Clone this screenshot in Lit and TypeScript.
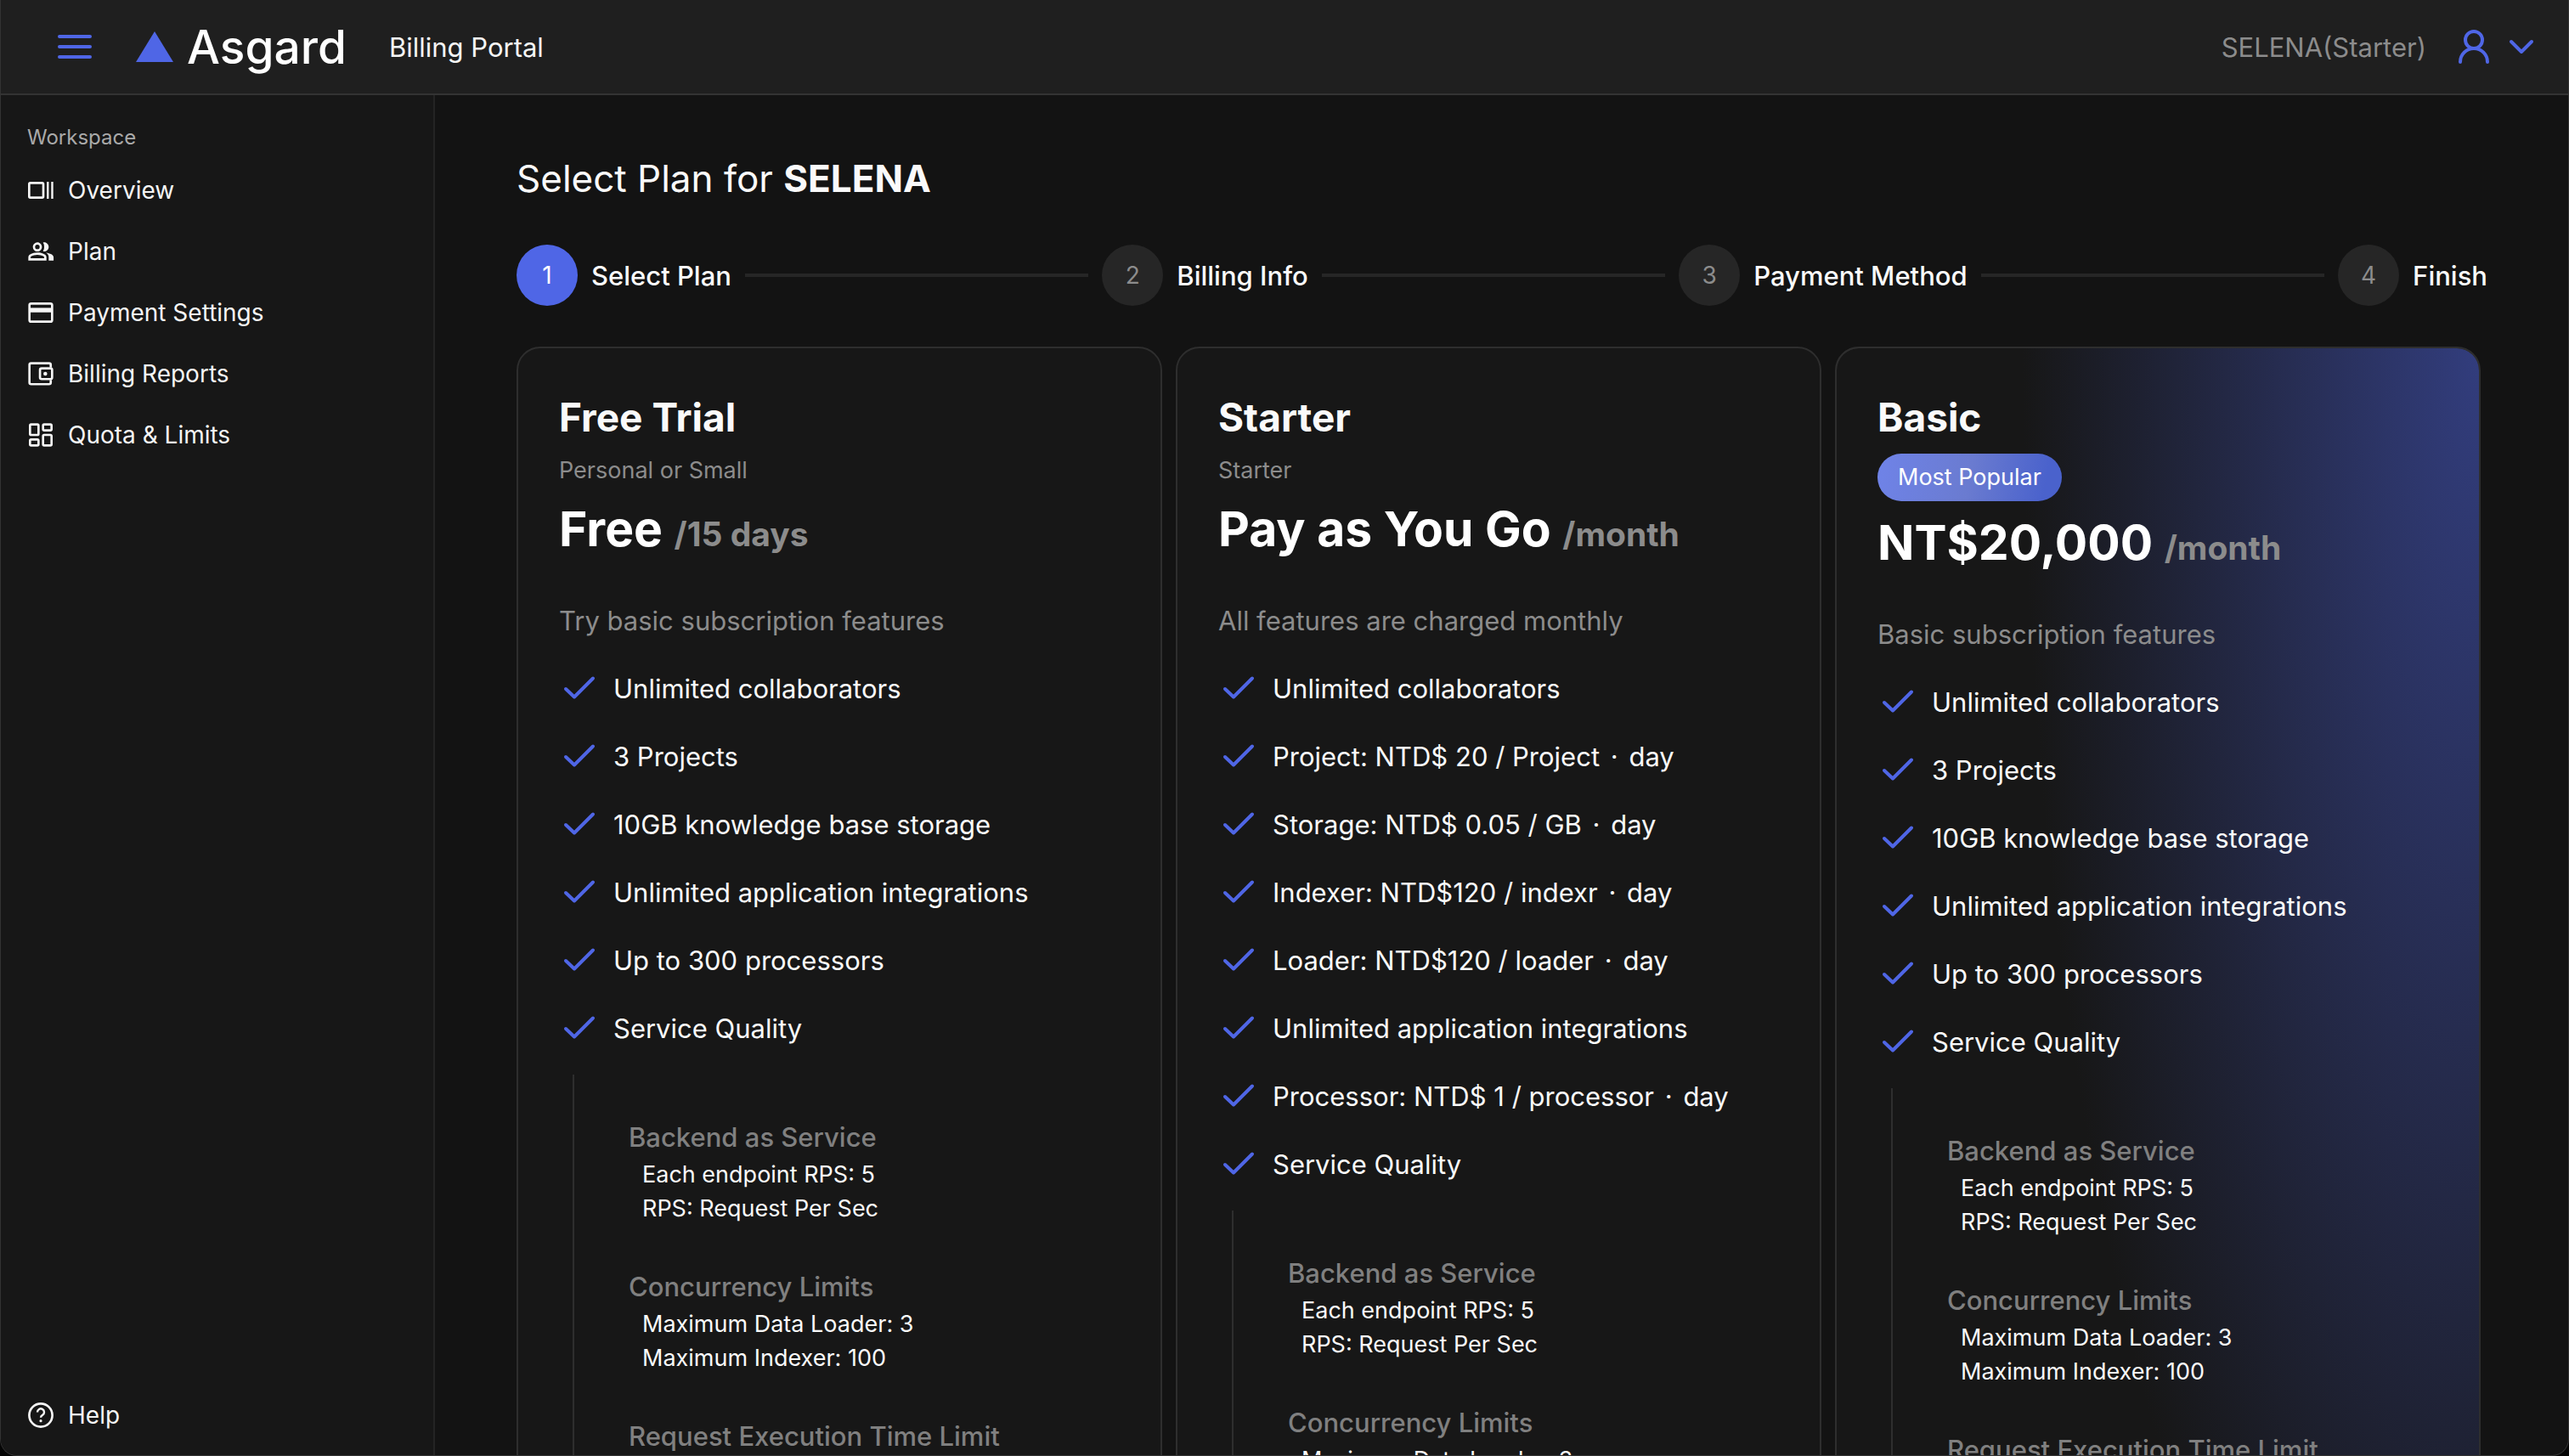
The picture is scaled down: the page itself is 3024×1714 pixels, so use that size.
import { LitElement, html, css, svg } from "lit";
import { customElement, property } from "lit/decorators.js";

type Plan = {
  name: string;
  note: string;
  badge?: string;
  price: string;
  unit: string;
  summary: string;
  features: Feature[];
};

// `per` is the billing period, set off from the text by a middle dot.
type Feature = { text: string; per?: string };

type NavItem = { label: string; icon: unknown };

const icons = {
  overview: svg`<rect x="1.75" y="5.500" width="12.500" height="13" rx="1"/><path d="M18.200 4.500v15M22.100 4.500v15" stroke-width="1.800"/>`,
  plan: svg`<g fill="currentColor" stroke="none"><path d="M1 20v-2.8c0-.6.1-1.1.4-1.500.3-.5.7-.9 1.200-1.100a14.800 14.800 0 0 1 3.100-1.200A13.800 13.800 0 0 1 9 13c1.100 0 2.200.1 3.300.4 1.100.3 2.100.7 3.100 1.200.5.2.9.6 1.200 1.100.3.4.4.9.4 1.500V20H1Zm18 0v-3c0-.7-.2-1.400-.6-2.100a5.200 5.200 0 0 0-1.800-1.800c.9.1 1.700.3 2.500.5.8.2 1.500.5 2.200.9.6.4 1.100.8 1.500 1.200.3.500.500 1 .500 1.500V20H19ZM9 12c-1.100 0-2-.4-2.800-1.200A3.900 3.900 0 0 1 5 8c0-1.100.4-2 1.200-2.800A3.900 3.900 0 0 1 9 4c1.100 0 2 .4 2.800 1.200C12.600 6 13 6.900 13 8c0 1.100-.4 2-1.200 2.800-.8.8-1.700 1.200-2.800 1.200Zm10-4c0 1.100-.4 2-1.200 2.800A3.900 3.900 0 0 1 14 11.900a6 6 0 0 0 1-3.900 6 6 0 0 0-1-3.800c1.400-.5 2.800-.1 3.800 1C18.600 6 19 6.900 19 8ZM3 18h12v-.8a.9.900 0 0 0-.500-.8 11.800 11.800 0 0 0-2.600-1c-1.900-.5-3.900-.5-5.800 0-.9.200-1.700.600-2.600 1a.9.900 0 0 0-.500.800v.800Zm6-8a2 2 0 1 0 0-4 2 2 0 0 0 0 4Z" fill-rule="evenodd"/></g>`,
  payment: svg`<rect x="2" y="4" width="20" height="16" rx="1.500"/><path d="M2 9.800h20" stroke-width="4"/>`,
  billing: svg`<path d="M20.800 6.500V4.200a1.500 1.500 0 0 0-1.500-1.500H3.500A1.500 1.500 0 0 0 2 4.200v15.500a1.500 1.500 0 0 0 1.500 1.500h15.800a1.500 1.500 0 0 0 1.500-1.500V17.400"/><rect x="11.300" y="7.200" width="10.700" height="9.500" rx="1.500"/><circle cx="16" cy="12" r="1.700" fill="currentColor" stroke="none"/>`,
  quota: svg`<rect x="2.500" y="2.700" width="7.500" height="9.300" rx="1"/><rect x="14" y="2.700" width="7.500" height="5.300" rx="1"/><rect x="14" y="12" width="7.500" height="9.300" rx="1"/><rect x="2.500" y="16" width="7.500" height="5.300" rx="1"/>`,
  help: svg`<circle cx="12" cy="12" r="10.200"/><path d="M9 9.300a3 3 0 1 1 4.600 2.500c-1 .7-1.600 1.100-1.600 2.200" stroke-width="1.800"/><circle cx="12" cy="17" r="1.200" fill="currentColor" stroke="none"/>`,
};

const navItems: NavItem[] = [
  { label: "Overview", icon: icons.overview },
  { label: "Plan", icon: icons.plan },
  { label: "Payment Settings", icon: icons.payment },
  { label: "Billing Reports", icon: icons.billing },
  { label: "Quota & Limits", icon: icons.quota },
];

const steps = ["Select Plan", "Billing Info", "Payment Method", "Finish"];

const standardFeatures: Feature[] = [
  { text: "Unlimited collaborators" },
  { text: "3 Projects" },
  { text: "10GB knowledge base storage" },
  { text: "Unlimited application integrations" },
  { text: "Up to 300 processors" },
  { text: "Service Quality" },
];

const plans: Plan[] = [
  {
    name: "Free Trial",
    note: "Personal or Small",
    price: "Free",
    unit: "/15 days",
    summary: "Try basic subscription features",
    features: standardFeatures,
  },
  {
    name: "Starter",
    note: "Starter",
    price: "Pay as You Go",
    unit: "/month",
    summary: "All features are charged monthly",
    features: [
      { text: "Unlimited collaborators" },
      { text: "Project: NTD$ 20 / Project", per: "day" },
      { text: "Storage: NTD$ 0.05 / GB", per: "day" },
      { text: "Indexer: NTD$120 / indexr", per: "day" },
      { text: "Loader: NTD$120 / loader", per: "day" },
      { text: "Unlimited application integrations" },
      { text: "Processor: NTD$ 1 / processor", per: "day" },
      { text: "Service Quality" },
    ],
  },
  {
    name: "Basic",
    note: "",
    badge: "Most Popular",
    price: "NT$20,000",
    unit: "/month",
    summary: "Basic subscription features",
    features: standardFeatures,
  },
];

const quality = [
  { title: "Backend as Service", lines: ["Each endpoint RPS: 5", "RPS: Request Per Sec"] },
  { title: "Concurrency Limits", lines: ["Maximum Data Loader: 3", "Maximum Indexer: 100"] },
  { title: "Request Execution Time Limit", lines: [] },
];

@customElement("side-nav")
class SideNav extends LitElement {
  static styles = css`
    :host { display: flex; }
    .nav {
      flex: 1;
      display: flex;
      flex-direction: column;
      padding: 28px 0 11px 31px;
    }
    .heading { margin: 0; font-size: 24px; line-height: 44px; font-weight: 400; color: #a9a9a9; }
    .item {
      display: flex;
      align-items: center;
      gap: 16px;
      height: 72px;
      font-size: 28px;
      color: #f5f5f5;
      text-decoration: none;
    }
    .items { flex: 1; margin: 4px 0 0; padding: 0; list-style: none; }
    .icon { width: 32px; height: 32px; fill: none; stroke: currentColor; stroke-width: 2; }
  `;

  private item({ label, icon }: NavItem) {
    return html`<a class="item" href="#">
      <svg class="icon" viewBox="0 0 24 24" aria-hidden="true">${icon}</svg>${label}
    </a>`;
  }

  render() {
    return html`<nav class="nav" aria-label="Workspace">
      <h2 class="heading">Workspace</h2>
      <ul class="items">${navItems.map((n) => html`<li>${this.item(n)}</li>`)}</ul>
      ${this.item({ label: "Help", icon: icons.help })}
    </nav>`;
  }
}

@customElement("step-bar")
class StepBar extends LitElement {
  static styles = css`
    :host { display: block; }
    .steps { display: flex; align-items: center; gap: 16px; margin: 0; padding: 0; list-style: none; }
    .step { display: flex; flex: 1 1 auto; align-items: center; gap: 16px; }
    .step:last-child { flex: none; }
    .dot {
      display: grid;
      place-items: center;
      width: 72px;
      height: 72px;
      border-radius: 50%;
      background: #262626;
      color: #8c8c8c;
      font-size: 28px;
    }
    .current .dot { background: #4f66e6; color: #fff; }
    .label { font-size: 31px; font-weight: 500; color: #fafafa; white-space: nowrap; }
    .step:not(:last-child)::after { content: ""; flex: 1; height: 4px; background: #262626; }
  `;

  render() {
    return html`<ol class="steps">
      ${steps.map(
        (s, i) => html`<li class="step ${i === 0 ? "current" : ""}">
          <span class="dot">${i + 1}</span><span class="label">${s}</span>
        </li>`
      )}
    </ol>`;
  }
}

@customElement("plan-card")
class PlanCard extends LitElement {
  @property({ attribute: false }) plan!: Plan;

  static styles = css`
    :host { display: flex; }
    .card {
      flex: 1;
      padding: 48px 48px 80px;
      border: 2px solid #2e2e2e;
      border-radius: 28px;
      background: #171717;
    }
    .popular {
      background: radial-gradient(71% 1816px at top right, #323d7d, #171717) padding-box, #2e2e2e border-box;
    }
    .name { margin: 0 0 8px; font-size: 46px; line-height: 66px; font-weight: 700; color: #fafafa; }
    .note { margin: 0; font-size: 27px; line-height: 44px; color: #8c8c8c; }
    .badge-row { display: flex; padding: 2px 0; }
    .badge {
      padding: 0 24px;
      border-radius: 28px;
      background: linear-gradient(100deg, #6f83e8, #6a7bd0 50%, #4a62cc 90%);
      font-size: 27px;
      line-height: 56px;
      color: #fff;
    }
    .price { margin: 0; font-size: 57px; line-height: 94px; font-weight: 700; color: #fff; }
    .unit { font-size: 39px; color: #8c8c8c; }
    .summary { margin: 33px 0 0; font-size: 31px; line-height: 44px; color: #8c8c8c; }
    .features { margin: 18px 0 0; padding: 0; list-style: none; }
    .feature {
      display: flex;
      align-items: center;
      gap: 16px;
      font-size: 31px;
      line-height: 80px;
      color: #fafafa;
      white-space: nowrap;
    }
    .separator { margin: 0 4px; }
    .check { width: 48px; height: 48px; fill: none; stroke: #4f66e6; stroke-width: 4; stroke-linecap: round; stroke-linejoin: round; }
    .quality { margin: 14px 0 0 16px; padding: 50px 0 0 64px; border-left: 2px solid #2e2e2e; }
    .group { padding-bottom: 48px; }
    .group-title { margin: 0; font-size: 31px; line-height: 48px; font-weight: 500; color: #808080; }
    .line { margin: 0; padding-left: 16px; font-size: 27px; line-height: 40px; color: #fafafa; }
  `;

  render() {
    const p = this.plan;
    return html`<article class="card ${p.badge ? "popular" : ""}">
      <h2 class="name">${p.name}</h2>
      ${p.badge
        ? html`<div class="badge-row"><span class="badge">${p.badge}</span></div>`
        : html`<p class="note">${p.note}</p>`}
      <p class="price">${p.price} <span class="unit">${p.unit}</span></p>
      <p class="summary">${p.summary}</p>
      <ul class="features">
        ${p.features.map(
          (f) => html`<li class="feature">
            <svg class="check" viewBox="0 0 48 48" aria-hidden="true"><path d="M8 24l10 9.500 22-22" /></svg>
            <span>${f.text}${f.per ? html` <span class="separator">·</span> ${f.per}` : ""}</span>
          </li>`
        )}
      </ul>
      <div class="quality">
        ${quality.map(
          (g) => html`<section class="group">
            <h3 class="group-title">${g.title}</h3>
            ${g.lines.map((l) => html`<p class="line">${l}</p>`)}
          </section>`
        )}
      </div>
    </article>`;
  }
}

@customElement("app-root")
class AppRoot extends LitElement {
  static styles = css`
    :host {
      display: block;
      background: #050505;
      font-family: Inter, "Noto Sans", "Liberation Sans", sans-serif;
    }
    .shell {
      box-sizing: border-box;
      display: grid;
      grid-template: auto minmax(0, 1fr) / 512px minmax(0, 1fr);
      height: 100vh;
      overflow: hidden;
      border: 1px solid #333;
      border-top: 0;
      border-radius: 0 0 20px 20px;
      background: #131313;
    }
    .top {
      grid-column: 1 / -1;
      display: flex;
      align-items: center;
      height: 110px;
      padding: 0 35px 0 63px;
      border-bottom: 2px solid #333;
      background: #1f1f1f;
    }
    .icon-button { display: flex; padding: 0; border: 0; background: none; color: #4f66e6; cursor: pointer; }
    .stroke { fill: none; stroke: currentColor; stroke-width: 4; stroke-linecap: round; stroke-linejoin: round; }
    .menu { width: 48px; height: 48px; }
    .brand { display: flex; align-items: center; gap: 16px; margin-left: 48px; color: #fff; text-decoration: none; }
    .mark { width: 44px; height: 36px; fill: #4f66e6; }
    .wordmark { font-size: 55px; line-height: 64px; font-weight: 500; }
    .portal { flex: 1; margin-left: 50px; font-size: 31px; color: #f5f5f5; }
    .account { margin-right: 32px; font-size: 31px; color: #8c8c8c; }
    .user-menu { align-items: center; gap: 12px; }
    .user { width: 48px; height: 48px; }
    .chevron { width: 40px; height: 40px; }
    .side { border-right: 2px solid #242424; background: #171717; margin-right: 1px; }
    .main { overflow: hidden; padding: 64px 95px 0; }
    .title { margin: 0 0 44px; font-size: 44px; line-height: 68px; font-weight: 400; color: #fafafa; }
    .strong { font-weight: 700; }
    .plans { display: grid; grid-template-columns: repeat(3, minmax(0, 1fr)); align-items: stretch; gap: 16px; padding: 48px 8px 0 0; }
  `;

  render() {
    return html`<div class="shell">
      <header class="top">
        <button class="icon-button" aria-label="Toggle menu">
          <svg class="menu stroke" viewBox="0 0 48 48"><path d="M6 12h36M6 24h36M6 36h36" /></svg>
        </button>
        <a class="brand" href="#">
          <svg class="mark" viewBox="0 0 44 36" aria-hidden="true"><path d="M22 0l22 36H0z" /></svg>
          <span class="wordmark">Asgard</span>
        </a>
        <span class="portal">Billing Portal</span>
        <span class="account">SELENA(Starter)</span>
        <button class="icon-button user-menu" aria-label="Account menu">
          <svg class="user stroke" viewBox="0 0 48 48"><circle cx="24" cy="16" r="10" /><path d="M8 42a16 16 0 0 1 32 0" /></svg>
          <svg class="chevron stroke" viewBox="0 0 40 40"><path d="M8 14l12 12 12-12" /></svg>
        </button>
      </header>
      <side-nav class="side"></side-nav>
      <main class="main">
        <h1 class="title">Select Plan for <strong class="strong">SELENA</strong></h1>
        <step-bar></step-bar>
        <div class="plans">${plans.map((p) => html`<plan-card .plan=${p}></plan-card>`)}</div>
      </main>
    </div>`;
  }
}
